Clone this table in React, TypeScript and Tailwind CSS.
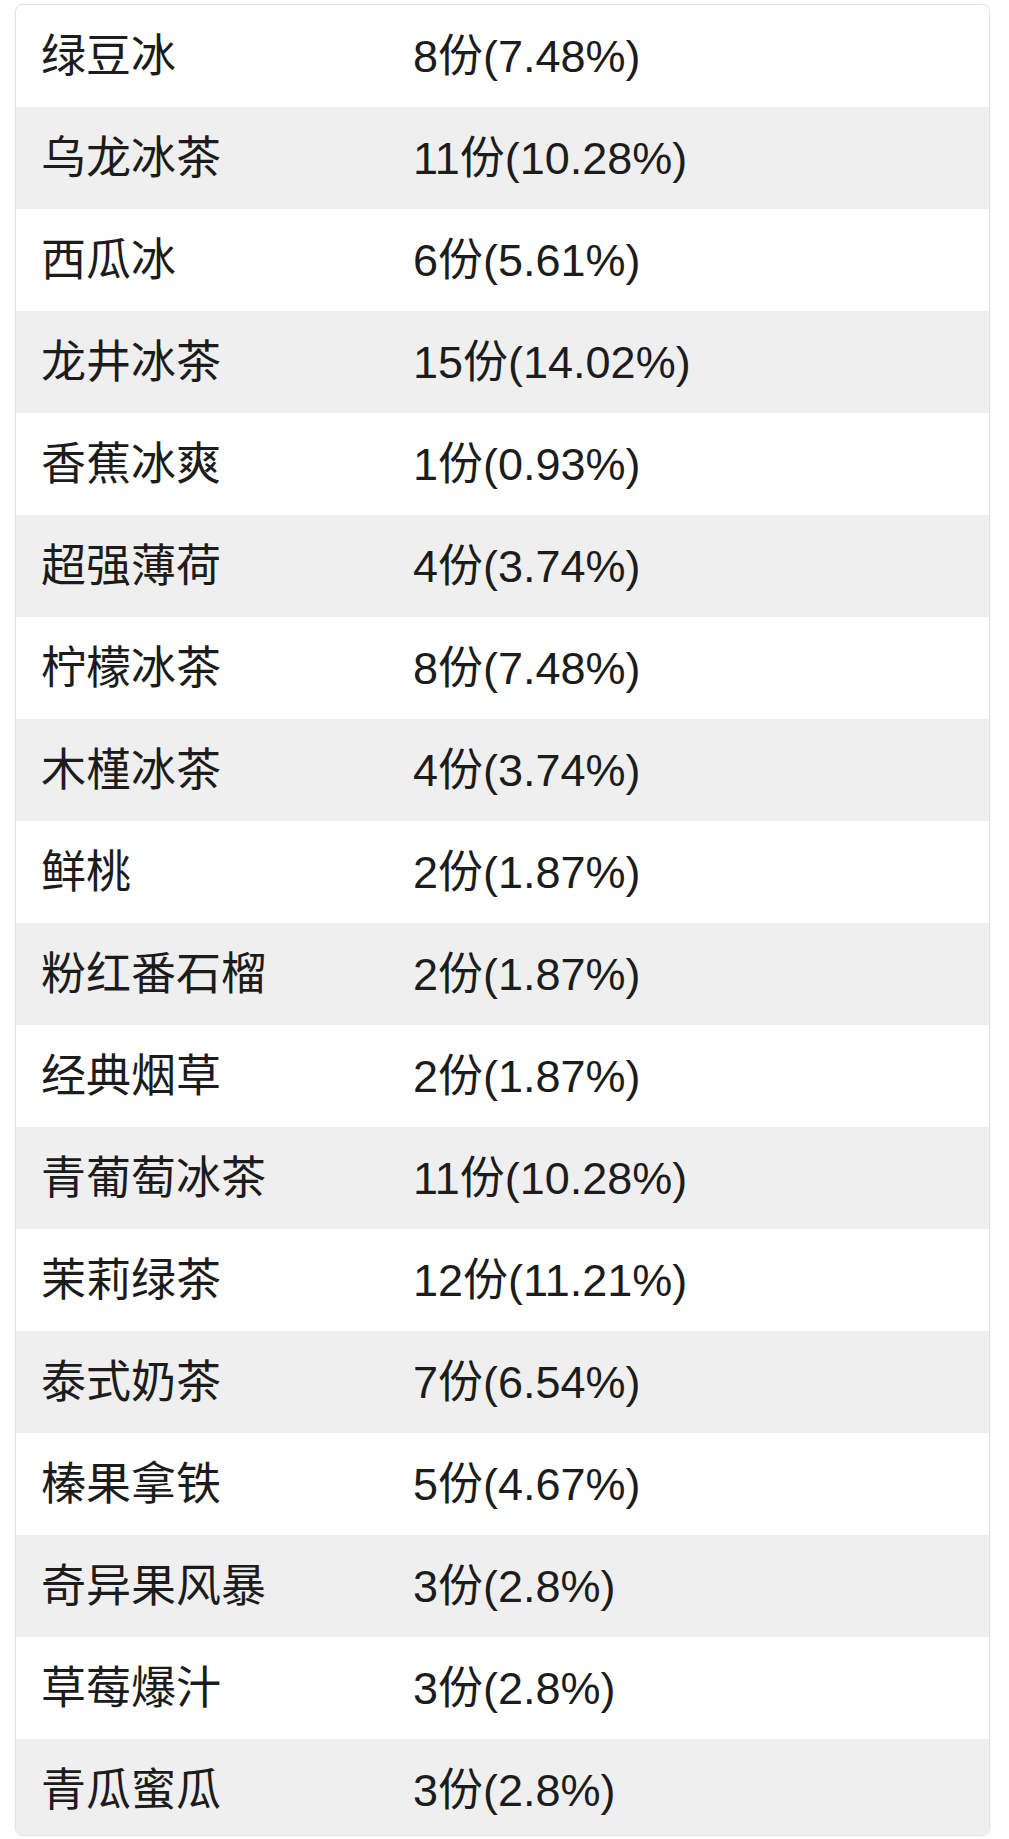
import React from "react";

const rows: [string, string][] = [
  ["绿豆冰", "8份(7.48%)"],
  ["乌龙冰茶", "11份(10.28%)"],
  ["西瓜冰", "6份(5.61%)"],
  ["龙井冰茶", "15份(14.02%)"],
  ["香蕉冰爽", "1份(0.93%)"],
  ["超强薄荷", "4份(3.74%)"],
  ["柠檬冰茶", "8份(7.48%)"],
  ["木槿冰茶", "4份(3.74%)"],
  ["鲜桃", "2份(1.87%)"],
  ["粉红番石榴", "2份(1.87%)"],
  ["经典烟草", "2份(1.87%)"],
  ["青葡萄冰茶", "11份(10.28%)"],
  ["茉莉绿茶", "12份(11.21%)"],
  ["泰式奶茶", "7份(6.54%)"],
  ["榛果拿铁", "5份(4.67%)"],
  ["奇异果风暴", "3份(2.8%)"],
  ["草莓爆汁", "3份(2.8%)"],
  ["青瓜蜜瓜", "3份(2.8%)"],
];

export default function App() {
  return (
    <div
      className="w-[1009px] h-[1839px] bg-white pt-[4px] pl-[15px] text-[#1c1c1c]"
      style={{ fontFamily: '"Liberation Sans", "Noto Sans CJK SC", sans-serif' }}
    >
      <div className="w-[975px] h-[1832px] border border-[#e2e2e2] rounded-[8px] overflow-hidden shadow-[0_0_3px_rgba(0,0,0,0.06)]">
        {rows.map(([name, val], i) => (
          <div
            key={i}
            className={`flex items-center h-[102px] shrink-0 text-[45px] leading-none ${
              i % 2 === 1 ? "bg-[#efeff0]" : "bg-white"
            }`}
          >
            <div className="w-[397px] pl-[25px]">{name}</div>
            <div>{val}</div>
          </div>
        ))}
      </div>
    </div>
  );
}
